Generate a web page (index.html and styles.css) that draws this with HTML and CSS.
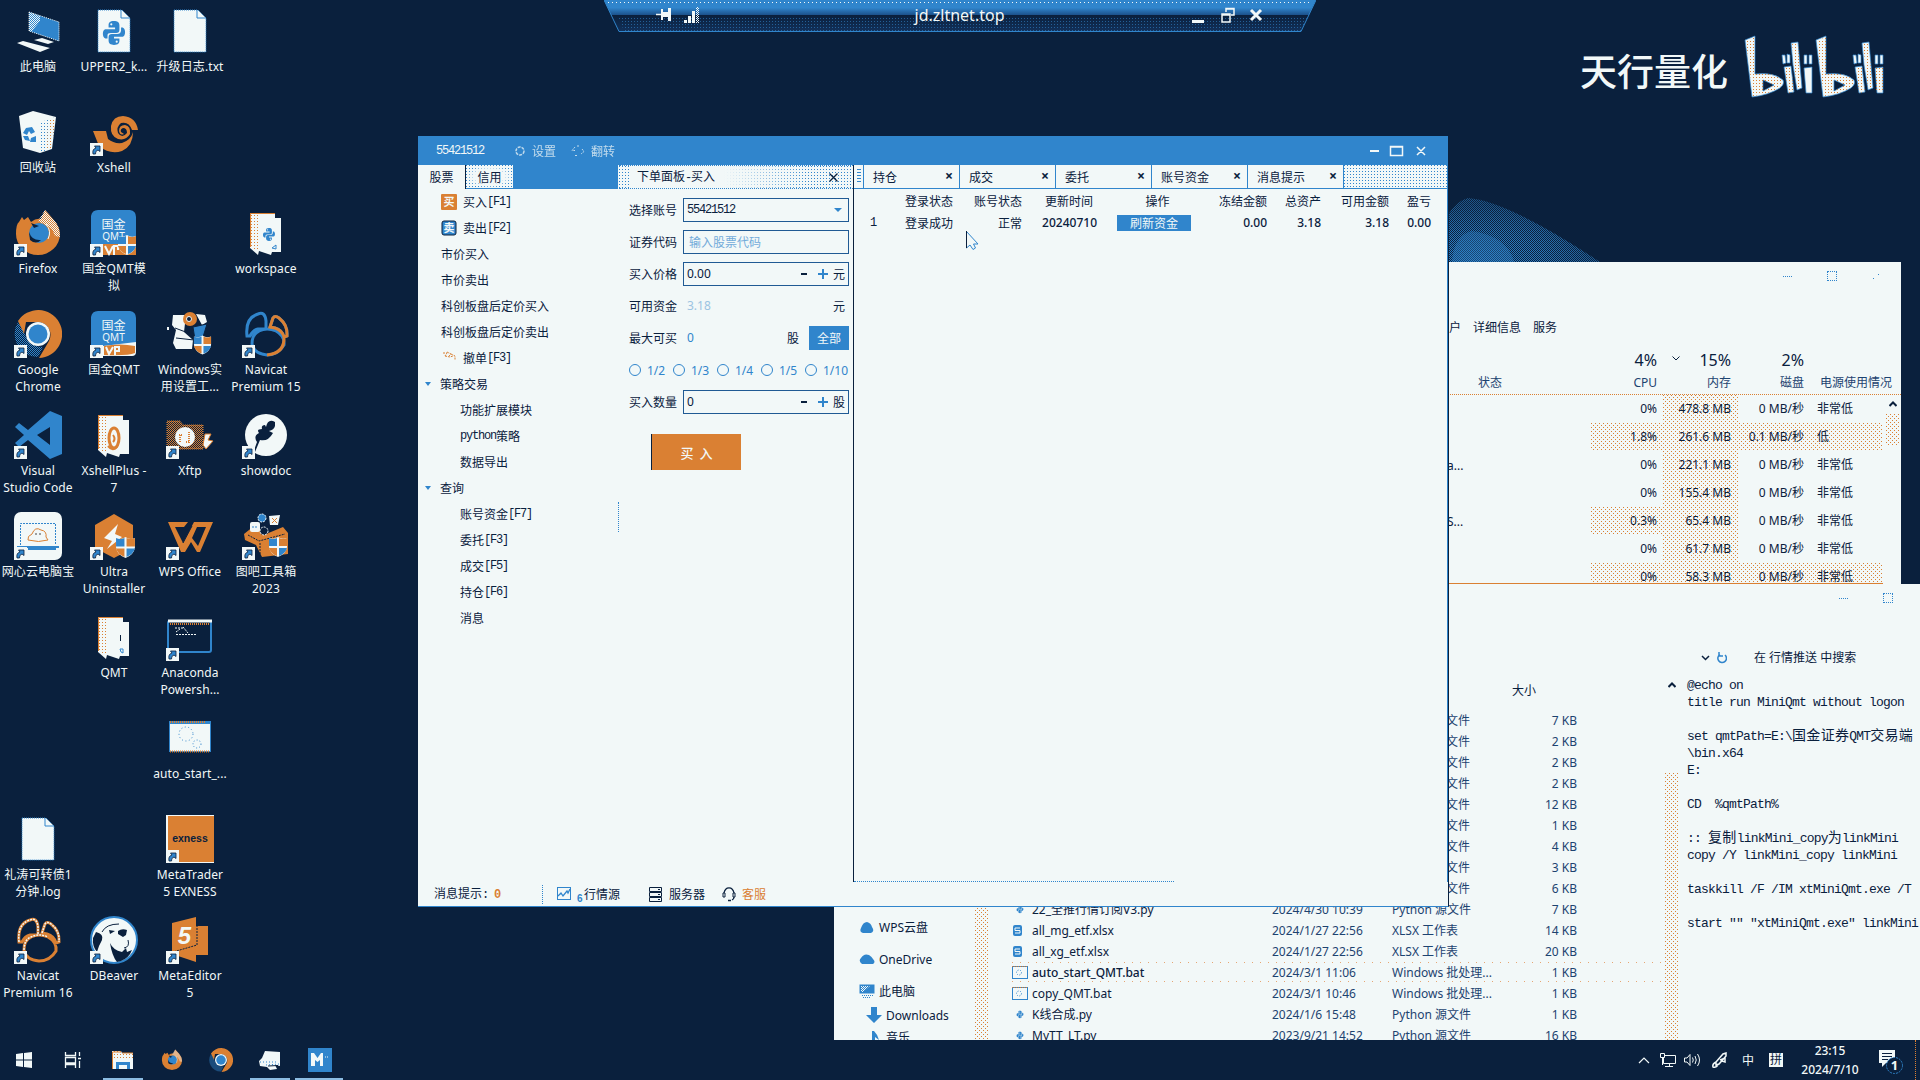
FILE: index.html
```
<!DOCTYPE html>
<html lang="zh-CN">
<head>
<meta charset="utf-8">
<title>jd.zltnet.top</title>
<link rel="stylesheet" href="styles.css">
</head>
<body>
<svg class="defs" aria-hidden="true">
  <defs>
    <pattern id="dots" width="3" height="3" patternUnits="userSpaceOnUse"><rect width="1" height="1" fill="#da8033"/></pattern>
    <pattern id="dotsBlue" width="3" height="3" patternUnits="userSpaceOnUse"><rect width="1" height="1" fill="#3085cc"/></pattern>
    <pattern id="dotsDense" width="2" height="2" patternUnits="userSpaceOnUse"><rect width="1" height="1" fill="#da8033"/><rect x="1" y="1" width="1" height="1" fill="#da8033"/></pattern>
    <pattern id="checkBlue" width="2" height="2" patternUnits="userSpaceOnUse"><rect width="1" height="1" fill="#3085cc"/><rect x="1" y="1" width="1" height="1" fill="#3085cc"/></pattern>
    <pattern id="checkWhite" width="2" height="2" patternUnits="userSpaceOnUse"><rect width="1" height="1" fill="#f2f8f8"/><rect x="1" y="1" width="1" height="1" fill="#f2f8f8"/></pattern>
    <radialGradient id="glow" cx="0.18" cy="1" r="0.9"><stop offset="0" stop-color="#fff"/><stop offset="0.5" stop-color="#ddd"/><stop offset="1" stop-color="#888"/></radialGradient>
    <mask id="glowMask"><path d="M0 20Q8 6 20 3Q60 6 152 67H0Z" fill="url(#glow)"/></mask>
    <symbol id="arrow" viewBox="0 0 13 13"><rect width="13" height="13" fill="#f2f8f8"/><path d="M3 11Q2 6 6 5L4.500 3H10V8.500L8 7Q5 8 5.500 11Z" fill="#3085cc" stroke="#0a203d" stroke-width=".8"/></symbol>
    <symbol id="shield" viewBox="0 0 20 20"><path d="M1 1Q6 3 10 0Q14 3 19 1V10Q18 17 10 20Q2 17 1 10Z" fill="#f2f8f8"/><path d="M1 1Q5 3 9 1V9H1Z M11 11H19Q17 17 11 19Z" fill="#3085cc"/><path d="M11 1Q15 3 19 1V9H11Z M1 11H9V19Q3 17 1 11Z" fill="#da8033"/></symbol>
    <symbol id="py" viewBox="0 0 24 24"><path d="M12 1C8 1 7 2.500 7 5V7H13V8.500H4C1 9 1 16 4 17H6V14Q6 12 9 12H14Q17 12 17 9V5C17 2 15 1 12 1Z" fill="#3085cc"/><path d="M12 23C16 23 17 21.500 17 19V17H12V15.500H20C23 15 23 8 20 7H18.500V10Q18 13 15 13H10Q7 13 7 16V19C7 22 9 23 12 23Z" fill="#3085cc"/><circle cx="9.500" cy="4" r="1" fill="#f2f8f8"/><circle cx="14.500" cy="20" r="1" fill="#f2f8f8"/></symbol>
    <symbol id="file" viewBox="0 0 48 48"><path d="M8 3H32L40 11V45H8Z" fill="#f2f8f8" stroke="#3085cc" stroke-dasharray="1 1"/><path d="M31 3V11H40" fill="none" stroke="#3085cc"/></symbol>
    <symbol id="folder" viewBox="0 0 48 48"><path d="M8 5H33V9H39V43H30L29 46L17 42L16 46L8 39Z" fill="#f2f8f8"/><path d="M8 5H17V42L8 38Z" fill="url(#dots)"/><path d="M8 4.500H33M8.500 5V38" stroke="#da8033" fill="none"/></symbol>
    <symbol id="firefox" viewBox="0 0 48 48"><path d="M2 25Q2 15 5 13L8 8L10 11L14 8L17 13Q22 9 27 10L31 1L39 10Q46 18 46 25A22 21 0 0 1 2 25Z" fill="#da8033"/><path d="M24 12L31 1L40 11Q46 18 46 28L41 27Q38 18 33 17Z" fill="url(#checkWhite)"/><circle cx="25" cy="24" r="10" fill="#3085cc"/><path d="M15 23Q18 32 27 31Q22 36 16 31ZM17 14L25 17L20 19Z" fill="#0a203d"/><path d="M32 15Q38 22 34 30" fill="none" stroke="#f2f8f8"/></symbol>
    <symbol id="chrome" viewBox="0 0 48 48"><path d="M4 11A24 24 0 1 1 25 48L35 31A13 13 0 0 0 24 12H12L10 24Z" fill="#da8033"/><path d="M4 12L13 28Q18 37 29 37L24 47A23 23 0 0 1 4 12Z" fill="url(#checkBlue)"/><circle cx="24" cy="24" r="12" fill="#f2f8f8"/><circle cx="24" cy="24" r="9.500" fill="#3085cc"/></symbol>
    <symbol id="navicat" viewBox="0 0 48 48"><path d="M5 26Q3 8 16 4Q23 1 24 11V19H16Q11 20 8 26ZM28 17L31 8Q33 5 37 8Q46 15 45 26L42 27Q40 20 33 18ZM10 34Q10 24 17 21Q25 17 34 21Q43 26 42 35Q36 45 25 45Q12 44 10 34Z" fill="none" stroke="currentColor" stroke-width="3"/></symbol>
    <symbol id="bat" viewBox="0 0 16 13"><rect x=".5" y=".5" width="15" height="12" fill="#f2f8f8" stroke="#3085cc"/><path d="M0 .5H16" stroke="#da8033" stroke-dasharray="1 1"/><circle cx="7" cy="6.500" r="2.500" fill="none" stroke="#3085cc" stroke-dasharray="1 1.500"/></symbol>
  </defs>
</svg>

<main class="desktop">
  <svg class="wall-light" width="152" height="67" viewBox="0 0 152 67"><g mask="url(#glowMask)"><rect width="152" height="67" fill="url(#checkBlue)"/><path d="M4 67Q6 40 24 36Q60 42 66 67Z" fill="#3085cc" opacity=".4"/></g></svg>

  <div class="brand">
    <span class="brand-name">天行量化</span>
    <svg width="142" height="64" viewBox="0 0 142 64">
      <g id="bili" fill="#f2f8f8" stroke="#3085cc" stroke-width=".7">
        <path fill-rule="evenodd" d="M1 5L11 1V39Q30 37 39 45Q41 49 36 53Q25 60 8 62ZM19 45V56L30 50Z"/>
        <path d="M40 32L47 31L50 57L44 58ZM47 8L54 7L58 53L53 55L49 30ZM60 33L68 32V58L62 58ZM38 20H41L42 28L39 29ZM43 19L46 20V28H43ZM60 20H63V29H60ZM65 20H68V29H65Z"/>
      </g>
      <use href="#bili" x="71"/>
      <g fill="url(#dots)" fill-rule="evenodd"><path d="M2 6L11 2V39Q30 37 38 45Q40 49 35 53Q25 59 9 61ZM19 45V56L30 50ZM41 32L47 31L50 57L44 58ZM48 8L54 7L57 53L53 54Z"/><path d="M73 6L82 2V39Q101 37 109 45Q111 49 106 53Q96 59 80 61ZM90 45V56L101 50ZM112 32L118 31L121 57L115 58ZM119 8L125 7L128 53L124 54ZM131 33H139V57H132Z"/></g>
    </svg>
  </div>

  <section class="icons">
    <div class="ic r1 c1"><svg viewBox="0 0 48 48"><path d="M15 5L45 15V34L15 24Z" fill="#3085cc" stroke="#f2f8f8" stroke-dasharray="1 1"/><path d="M15 5L26 9V14L18 24H15Z" fill="url(#checkWhite)"/><path d="M3 36L9 34L36 41L26 45ZM20 33L28 31L40 35L34 37Z" fill="#f2f8f8"/></svg><p>此电脑</p></div>
    <div class="ic r1 c2"><svg viewBox="0 0 48 48"><use href="#file"/><use href="#py" x="11" y="13" width="26" height="26"/></svg><p>UPPER2_k...</p></div>
    <div class="ic r1 c3"><svg viewBox="0 0 48 48"><use href="#file"/></svg><p>升级日志.txt</p></div>
    <div class="ic r2 c1"><svg viewBox="0 0 48 48"><path d="M5 8L19 3L42 9L38 41L26 45L9 40Z" fill="#f2f8f8"/><path d="M27 14L42 9L38 41L26 44Z" fill="url(#dotsBlue)"/><path d="M34 12L41 11L38 40L33 42Z" fill="url(#dots)"/><path d="M12 20L18 19L21 24L17 26L15 23L13 27L9 25ZM9 28L14 28L16 33L11 32ZM17 30L22 28V34L16 34Z" fill="#3085cc"/></svg><p>回收站</p></div>
    <div class="ic r2 c2"><svg viewBox="0 0 48 48"><path d="M3 23H16L18 31Q24 36 32 35Q41 32 43 24Q43 38 32 43Q20 47 9 38ZM48 22H42Q39 13 31 15Q26 19 28 25Q32 31 37 25Q37 20 33 20Q30 21 31 24L34 26Q30 28 29 23Q29 17 35 17Q41 18 40 26Q36 33 28 31Q20 28 21 18Q23 8 33 8Q46 9 48 22Z" fill="#da8033"/><use href="#arrow" y="35" width="13" height="13"/></svg><p>Xshell</p></div>
    <div class="ic r3 c1"><svg viewBox="0 0 48 48"><use href="#firefox"/><use href="#arrow" y="35" width="13" height="13"/></svg><p>Firefox</p></div>
    <div class="ic r3 c2"><svg viewBox="0 0 48 48"><path d="M1 7Q2 1 8 1H40Q46 2 46 8V35H1Z" fill="#3085cc"/><text x="23.500" y="20" class="logo-cn">国金</text><text x="23.500" y="31" class="logo-en">QMT</text><rect y="35" width="46" height="11" fill="#da8033"/><path d="M15 37L19 45L23 37M24 46V37H28V41" stroke="#f2f8f8" stroke-width="2" fill="none"/><use href="#shield" x="27" y="26" width="20" height="20"/><use href="#arrow" y="35" width="13" height="13"/></svg><p>国金QMT模<br>拟</p></div>
    <div class="ic r3 c4"><svg viewBox="0 0 48 48"><use href="#folder"/><use href="#py" x="20" y="18" width="14" height="15"/><path d="M34 36V40L30 39Z" fill="none" stroke="#3085cc"/></svg><p>workspace</p></div>
    <div class="ic r4 c1"><svg viewBox="0 0 48 48"><use href="#chrome"/><use href="#arrow" y="35" width="13" height="13"/></svg><p>Google<br>Chrome</p></div>
    <div class="ic r4 c2"><svg viewBox="0 0 48 48"><path d="M1 7Q2 1 8 1H40Q46 2 46 8V36H1Z" fill="#3085cc"/><text x="23.500" y="20" class="logo-cn">国金</text><text x="23.500" y="31" class="logo-en">QMT</text><path d="M13 36L46 32V42Q46 46 42 46H13Z" fill="#f2f8f8"/><path d="M14 36Q30 33 45 36V43Q38 46 14 45Z" fill="#da8033"/><path d="M16 37L19 44L23 37M25 45V37H29V41H26" stroke="#f2f8f8" stroke-width="2" fill="none"/><use href="#arrow" y="35" width="13" height="13"/></svg><p>国金QMT</p></div>
    <div class="ic r4 c3"><svg viewBox="0 0 48 48"><path d="M7 5H20L18 22L27 30L26 39H10L7 33L10 20L6 15ZM30 4L39 5L41 12L36 15ZM1 17H3V20H1Z" fill="#f2f8f8"/><path d="M9 18L25 24M10 28L28 30" stroke="#0a203d"/><circle cx="24" cy="9" r="7" fill="#da8033"/><circle cx="23" cy="9" r="2.500" fill="#0a203d" stroke="#f2f8f8"/><path d="M27 17L41 14L37 27L29 30Z" fill="#3085cc" stroke="#0a203d"/><use href="#shield" x="27" y="25" width="19" height="20"/></svg><p>Windows实<br>用设置工...</p></div>
    <div class="ic r4 c4 blue"><svg viewBox="0 0 48 48"><use href="#navicat"/><path d="M28 17L31 8Q33 5 37 8Q46 15 45 26L42 27Q40 20 33 18ZM42 27Q43 43 25 45" fill="none" stroke="#da8033" stroke-width="3"/><use href="#arrow" y="35" width="13" height="13"/></svg><p>Navicat<br>Premium 15</p></div>
    <div class="ic r5 c1"><svg viewBox="0 0 48 48"><path fill-rule="evenodd" d="M36 0L48 5V43L36 48L14 29L5 36L1 32L10 24L1 16L5 12L14 19ZM36 16L23 24L36 34Z" fill="#3085cc"/><use href="#arrow" y="35" width="13" height="13"/></svg><p>Visual<br>Studio Code</p></div>
    <div class="ic r5 c2"><svg viewBox="0 0 48 48"><use href="#folder"/><ellipse cx="24" cy="27" rx="5" ry="10" fill="none" stroke="#da8033" stroke-width="3"/><path d="M23 24Q26 28 23 31M18 35Q23 41 27 36" fill="none" stroke="#da8033" stroke-width="2"/></svg><p>XshellPlus -<br>7</p></div>
    <div class="ic r5 c3"><svg viewBox="0 0 48 48"><path d="M1 10H14L17 14H37V38H1Z" fill="url(#dotsDense)" stroke="#da8033" stroke-dasharray="1 1"/><circle cx="19" cy="26" r="10" fill="#f2f8f8"/><path d="M14 31V23M13 24H17M23 21V32M20 31H24" stroke="#da8033" stroke-dasharray="1 1" stroke-width="2"/><path d="M39 23H45L42 29L47 30L40 38L37 34Z" fill="#f2f8f8" stroke="#da8033"/><use href="#arrow" y="35" width="13" height="13"/></svg><p>Xftp</p></div>
    <div class="ic r5 c4"><svg viewBox="0 0 48 48"><circle cx="24" cy="24" r="21" fill="#f2f8f8"/><path d="M11 42L15 31Q11 25 17 22Q14 18 20 18Q19 14 23 14L24 16Q26 7 33 11V15Q32 19 27 20L31 22Q26 31 18 29L13 41Z" fill="#0a203d"/><use href="#arrow" y="35" width="13" height="13"/></svg><p>showdoc</p></div>
    <div class="ic r6 c1"><svg viewBox="0 0 48 48"><rect width="48" height="48" rx="7" fill="#f2f8f8"/><path d="M6.500 33V11.500H41.500V33" fill="none" stroke="#3085cc" stroke-dasharray="2 1"/><path d="M14 28Q13 24 18 22Q21 14 27 18Q33 19 32 25L34 28Q25 31 14 28Z" fill="#f2f8f8" stroke="#da8033"/><circle cx="22" cy="22" r=".7"/><circle cx="26" cy="22" r=".7"/><path d="M3 35H45M14 37H42" stroke="#3085cc" stroke-width="2"/><use href="#arrow" y="35" width="13" height="13"/></svg><p>网心云电脑宝</p></div>
    <div class="ic r6 c2"><svg viewBox="0 0 48 48"><path d="M24 2L43 13V36L24 46L5 36V13Z" fill="#da8033"/><path d="M28 12L14 26L22 29L17 37L32 25L25 22Z" fill="#f2f8f8"/><use href="#shield" x="25" y="25" width="21" height="21"/><use href="#arrow" y="35" width="13" height="13"/></svg><p>Ultra<br>Uninstaller</p></div>
    <div class="ic r6 c3"><svg viewBox="0 0 48 48"><path fill-rule="evenodd" d="M2 10H22L18 15H9L17 31L28 10H47L34 40H31L25 30L19 40H15ZM31 15L26 26L32 34L40 15Z" fill="#da8033"/><path d="M17 31L26 14" stroke="#0a203d"/><use href="#arrow" y="35" width="13" height="13"/></svg><p>WPS Office</p></div>
    <div class="ic r6 c4"><svg viewBox="0 0 48 48"><path d="M2 22L12 14L24 22L41 15L46 21V42L20 45L14 33L3 28Z" fill="#da8033"/><path d="M6 23L17 29L43 22M18 31V43" stroke="#0a203d" stroke-dasharray="2 1" fill="none"/><circle cx="20" cy="6" r="4" fill="#3085cc" stroke="#f2f8f8" stroke-dasharray="2 1"/><rect x="8" y="10" width="10" height="10" rx="2" fill="#f2f8f8"/><path d="M10 15H16" stroke="#3085cc" stroke-dasharray="2 1"/><path d="M27 4L38 3L36 13H28Z" fill="#f2f8f8"/><path d="M30 6L35 11M35 6L30 11" stroke="#da8033"/><circle cx="22" cy="19" r="4" fill="#0a203d" stroke="#f2f8f8" stroke-dasharray="2 1"/><use href="#shield" x="26" y="25" width="20" height="20"/><use href="#arrow" y="35" width="13" height="13"/></svg><p>图吧工具箱<br>2023</p></div>
    <div class="ic r7 c2"><svg viewBox="0 0 48 48"><use href="#folder"/><path d="M30.500 22V28" stroke="#0a203d"/><path d="M30 36H33V40L31 39Z" fill="none" stroke="#3085cc"/></svg><p>QMT</p></div>
    <div class="ic r7 c3"><svg viewBox="0 0 48 48"><rect x="2" y="8" width="43" height="31" rx="2" fill="#0a203d" stroke="#3085cc" stroke-width="2"/><path d="M2 8H46" stroke="#f2f8f8" stroke-width="3"/><path d="M4 11H44" stroke="#da8033" stroke-dasharray="1 1" stroke-width="2"/><path d="M9 15H17M10 19L14 16M17 14L22 20M10 21.500H31" stroke="#f2f8f8" stroke-dasharray="2 1"/><use href="#arrow" y="35" width="13" height="13"/></svg><p>Anaconda<br>Powersh...</p></div>
    <div class="ic r8 c3"><svg viewBox="0 0 48 48"><rect x="3.500" y="7.500" width="41" height="30" fill="#f2f8f8" stroke="#3085cc"/><path d="M3 8.500H45" stroke="#3085cc" stroke-width="3"/><path d="M4 8H40M4 37.500H44" stroke="#da8033" stroke-dasharray="1 1" stroke-width="2"/><circle cx="20" cy="20" r="7" fill="none" stroke="#3085cc" stroke-dasharray="1 2.500"/><circle cx="31" cy="30" r="4" fill="none" stroke="#3085cc" stroke-dasharray="1 2"/></svg><p>auto_start_...</p></div>
    <div class="ic r9 c1"><svg viewBox="0 0 48 48"><use href="#file"/></svg><p>礼涛可转债1<br>分钟.log</p></div>
    <div class="ic r9 c3"><svg viewBox="0 0 48 48"><rect width="48" height="48" fill="#f2f8f8"/><rect x="2" y="1" width="46" height="46" fill="#da8033"/><text x="24" y="26.500" class="logo-ex">exness</text><use href="#arrow" y="35" width="13" height="13"/></svg><p>MetaTrader<br>5 EXNESS</p></div>
    <div class="ic r10 c1 orange"><svg viewBox="0 0 48 48"><use href="#navicat"/><path d="M5 26Q3 8 16 4Q23 1 24 11V19M28 17L31 8Q33 5 37 8Q46 15 45 26M10 34Q10 24 17 21Q25 17 34 21" fill="none" stroke="#f2f8f8" stroke-width="1.500" stroke-dasharray="2 1"/><use href="#arrow" y="35" width="13" height="13"/></svg><p>Navicat<br>Premium 16</p></div>
    <div class="ic r10 c2"><svg viewBox="0 0 48 48"><circle cx="24" cy="24" r="23" fill="#f2f8f8" stroke="#3085cc" stroke-width="2"/><path d="M6 16Q14 18 12 24Q9 29 7 36Q2 30 3 22ZM19 14L25 15L20 18ZM28 15Q32 12 37 14L36 19L33 21L28 18ZM20 27Q23 34 32 36L36 32L37 36L42 34Q39 42 31 45L27 46Q22 40 20 27Z" fill="#0a203d"/><path d="M12 16Q16 8 29 8M38 24Q40 31 34 32" fill="none" stroke="#0a203d"/><use href="#arrow" y="35" width="13" height="13"/></svg><p>DBeaver</p></div>
    <div class="ic r10 c3"><svg viewBox="0 0 48 48"><path d="M6 7L30 1V10H42V39H30V46L6 38Z" fill="#da8033"/><path d="M31 3V29L7 36" fill="none" stroke="#0a203d" stroke-dasharray="2 1"/><text x="18.500" y="28" class="logo-five">5</text><use href="#arrow" y="35" width="13" height="13"/></svg><p>MetaEditor<br>5</p></div>
  </section>

  <section class="win taskmgr">
    <header class="winctl"><i class="mn"></i><i class="mx"></i><i class="cl"></i></header>
    <nav class="tm-tabs"><span>户</span><span>详细信息</span><span>服务</span></nav>
    <div class="tm-grid tm-pct"><span></span><b>4%</b><b><svg width="8" height="5" viewBox="0 0 8 5"><path d="M.5.5L4 4L7.500.5" fill="none" stroke="#0a203d"/></svg>15%</b><b>2%</b><span></span></div>
    <div class="tm-grid tm-cols"><span class="st">状态</span><b>CPU</b><b>内存</b><b>磁盘</b><span>电源使用情况</span></div>
    <div class="tm-body">
      <div class="tm-rows">
        <div class="tm-grid"><span></span><b>0%</b><b class="h">478.8 MB</b><b>0 MB/秒</b><span>非常低</span></div>
        <div class="tm-grid hot"><span></span><b>1.8%</b><b class="h">261.6 MB</b><b>0.1 MB/秒</b><span>低</span></div>
        <div class="tm-grid"><span class="cut">a...</span><b>0%</b><b class="h">221.1 MB</b><b>0 MB/秒</b><span>非常低</span></div>
        <div class="tm-grid"><span></span><b>0%</b><b class="h">155.4 MB</b><b>0 MB/秒</b><span>非常低</span></div>
        <div class="tm-grid warm"><span class="cut">S...</span><b>0.3%</b><b class="h">65.4 MB</b><b>0 MB/秒</b><span>非常低</span></div>
        <div class="tm-grid"><span></span><b>0%</b><b class="h">61.7 MB</b><b>0 MB/秒</b><span>非常低</span></div>
        <div class="tm-grid hot last"><span></span><b>0%</b><b class="h">58.3 MB</b><b>0 MB/秒</b><span>非常低</span></div>
      </div>
      <div class="tm-scroll"><svg width="8" height="6" viewBox="0 0 8 6"><path d="M.5 5L4 1.500L7.500 5" fill="none" stroke="#0a203d" stroke-width="2"/></svg><i></i></div>
    </div>
  </section>

  <section class="win explorer">
    <header class="winctl"><i class="mn"></i><i class="mx"></i></header>
    <div class="ex-bar"><svg width="26" height="13" viewBox="0 0 26 13"><path d="M1 5L4.500 8.500L8 5" fill="none" stroke="#0a203d" stroke-width="1.500"/><path d="M19 3.500A4.300 4.300 0 1 0 24 4M18 1V5H22" fill="none" stroke="#3085cc" stroke-width="1.500"/></svg><span>在 行情推送 中搜索</span></div>
    <div class="ex-body">
      <aside class="ex-nav">
        <div class="nv"><svg width="16" height="14" viewBox="0 0 16 14"><path d="M4 13Q0 12 2 8Q4 2 8 2Q12 3 13 7Q16 11 12 13Z" fill="#3085cc"/></svg>WPS云盘</div>
        <div class="nv"><svg width="16" height="14" viewBox="0 0 16 14"><path d="M3 12Q-1 9 2 6Q5 1 10 3Q13 5 14 7Q17 10 14 12Z" fill="#3085cc"/></svg>OneDrive</div>
        <div class="nv"><svg width="16" height="14" viewBox="0 0 16 14"><rect x=".5" y=".5" width="15" height="9" fill="#3085cc"/><path d="M2 2H11L4 8H2Z" fill="url(#checkWhite)"/><path d="M3 11.500H14M4 13.500H12" stroke="#3085cc" stroke-dasharray="1 1"/></svg>此电脑</div>
        <div class="nv sub"><svg width="16" height="16" viewBox="0 0 16 16"><path d="M5 0H11V8H16L8 16L0 8H5Z" fill="#3085cc"/></svg>Downloads</div>
        <div class="nv sub"><svg width="16" height="16" viewBox="0 0 16 16"><path d="M6 2L8 2Q12 6 13 11L9 8V16H6Z" fill="#3085cc"/></svg>音乐</div>
      </aside>
      <div class="ex-split"></div>
      <div class="ex-list">
        <div class="fr head"><span></span><span></span><span></span><span></span><b>大小</b></div>
        <div class="files">
          <div class="fr"><span></span><span></span><span></span><span class="end">文件</span><b>7 KB</b></div>
          <div class="fr"><span></span><span></span><span></span><span class="end">文件</span><b>2 KB</b></div>
          <div class="fr"><span></span><span></span><span></span><span class="end">文件</span><b>2 KB</b></div>
          <div class="fr"><span></span><span></span><span></span><span class="end">文件</span><b>2 KB</b></div>
          <div class="fr"><span></span><span></span><span></span><span class="end">文件</span><b>12 KB</b></div>
          <div class="fr"><span></span><span></span><span></span><span class="end">文件</span><b>1 KB</b></div>
          <div class="fr"><span></span><span></span><span></span><span class="end">文件</span><b>4 KB</b></div>
          <div class="fr"><span></span><span></span><span></span><span class="end">文件</span><b>3 KB</b></div>
          <div class="fr"><span></span><span></span><span></span><span class="end">文件</span><b>6 KB</b></div>
          <div class="fr"><svg viewBox="0 0 16 13"><use href="#py" x="4" y="2" width="8" height="9"/></svg><em>22_全推行情订阅V3.py</em><span>2024/4/30 10:39</span><span>Python 源文件</span><b>7 KB</b></div>
          <div class="fr"><svg viewBox="0 0 16 13"><rect x="1" y="1" width="9" height="11" rx="2" fill="#3085cc"/><path d="M8 4H3V6.500H8V9H3" fill="none" stroke="#f2f8f8"/></svg><em>all_mg_etf.xlsx</em><span>2024/1/27 22:56</span><span>XLSX 工作表</span><b>14 KB</b></div>
          <div class="fr"><svg viewBox="0 0 16 13"><rect x="1" y="1" width="9" height="11" rx="2" fill="#3085cc"/><path d="M8 4H3V6.500H8V9H3" fill="none" stroke="#f2f8f8"/></svg><em>all_xg_etf.xlsx</em><span>2024/1/27 22:56</span><span>XLSX 工作表</span><b>20 KB</b></div>
          <div class="fr sel"><svg viewBox="0 0 16 13"><use href="#bat"/></svg><em>auto_start_QMT.bat</em><span>2024/3/1 11:06</span><span>Windows 批处理...</span><b>1 KB</b></div>
          <div class="fr"><svg viewBox="0 0 16 13"><use href="#bat"/></svg><em>copy_QMT.bat</em><span>2024/3/1 10:46</span><span>Windows 批处理...</span><b>1 KB</b></div>
          <div class="fr"><svg viewBox="0 0 16 13"><use href="#py" x="4" y="2" width="8" height="9"/></svg><em>K线合成.py</em><span>2024/1/6 15:48</span><span>Python 源文件</span><b>1 KB</b></div>
          <div class="fr"><svg viewBox="0 0 16 13"><use href="#py" x="4" y="2" width="8" height="9"/></svg><em>MyTT_LT.py</em><span>2023/9/21 14:52</span><span>Python 源文件</span><b>16 KB</b></div>
        </div>
      </div>
      <div class="ex-scroll"><svg width="8" height="6" viewBox="0 0 8 6"><path d="M.5 5L4 1.500L7.500 5" fill="none" stroke="#0a203d" stroke-width="2"/></svg><i></i></div>
<pre class="code">@echo on
title run MiniQmt without logon

set qmtPath=E:\<span>国金证券</span>QMT<span>交易端</span>
\bin.x64
E:

CD  %qmtPath%

:: <span>复制</span>linkMini_copy<span>为</span>linkMini
copy /Y linkMini_copy linkMini

taskkill /F /IM xtMiniQmt.exe /T

start "" "xtMiniQmt.exe" linkMini</pre>
    </div>
  </section>

  <section class="win trade">
    <header class="tr-title">
      <span class="n acct">55421512</span>
      <span class="tool"><svg width="12" height="12" viewBox="0 0 12 12"><circle cx="6" cy="6" r="4" fill="none" stroke="#f2f8f8" stroke-width="1.500" stroke-dasharray="3 1"/></svg>设置</span>
      <span class="tool"><svg width="14" height="12" viewBox="0 0 14 12"><path d="M4 2L1 5.500H4M11 4L13 6.500L10 9M4 10.500H7M6 1H8" fill="none" stroke="#f2f8f8" stroke-dasharray="2 1"/></svg>翻转</span>
      <svg class="ctl" width="56" height="12" viewBox="0 0 56 12"><path d="M0 6H9" stroke="#f2f8f8" stroke-width="2"/><path d="M20.500 1.500H32.500V10.500H20.500ZM20 2H33M47 2L55 10M55 2L47 10" fill="none" stroke="#f2f8f8" stroke-width="1.500"/></svg>
    </header>
    <div class="tr-main">
      <aside class="side">
        <div class="side-tabs"><span class="on">股票</span><span class="off">信用</span></div>
        <div class="tree">
          <div class="t ico"><svg width="16" height="16" viewBox="0 0 16 16"><rect width="16" height="16" rx="1" fill="#da8033"/><text x="8" y="12" class="sq">买</text></svg>买入<i class="n">[F1]</i></div>
          <div class="t ico"><svg width="16" height="16" viewBox="0 0 16 16"><rect x="1" y="1" width="14" height="14" rx="2" fill="#3085cc" stroke="#0a203d"/><text x="8" y="12" class="sq">卖</text></svg>卖出<i class="n">[F2]</i></div>
          <div class="t">市价买入</div>
          <div class="t">市价卖出</div>
          <div class="t">科创板盘后定价买入</div>
          <div class="t">科创板盘后定价卖出</div>
          <div class="t ico"><svg width="16" height="16" viewBox="0 0 16 16"><path d="M2 3L6 3L4 6M6 2L10 4L8 6M10 4L14 6V10M4 6L9 7L12 6" fill="none" stroke="#da8033" stroke-dasharray="2 1"/></svg>撤单<i class="n">[F3]</i></div>
          <div class="t grp">策略交易</div>
          <div class="t lv2">功能扩展模块</div>
          <div class="t lv2"><i class="n">python</i>策略</div>
          <div class="t lv2">数据导出</div>
          <div class="t grp">查询</div>
          <div class="t lv2">账号资金<i class="n">[F7]</i></div>
          <div class="t lv2">委托<i class="n">[F3]</i></div>
          <div class="t lv2">成交<i class="n">[F5]</i></div>
          <div class="t lv2">持仓<i class="n">[F6]</i></div>
          <div class="t lv2">消息</div>
        </div>
      </aside>
      <div class="handle"></div>
      <section class="order">
        <header class="ord-head"><span>下单面板<i class="n">-</i>买入</span><svg width="9" height="9" viewBox="0 0 9 9"><path d="M.5.5L8.500 8.500M8.500.5L.5 8.500" stroke="#0a203d" stroke-width="1.300"/></svg></header>
        <div class="form">
          <div class="f"><label>选择账号</label><div class="box"><span class="n">55421512</span><u class="dd"></u></div></div>
          <div class="f"><label>证券代码</label><div class="box ph">输入股票代码</div></div>
          <div class="f"><label>买入价格</label><div class="box"><span class="v">0.00</span><u class="mi"></u><u class="pl"></u>元</div></div>
          <div class="f"><label>可用资金</label><div class="plain"><span class="v faint">3.18</span>元</div></div>
          <div class="f"><label>最大可买</label><div class="plain mx-buy"><span class="v bl">0</span>股<button>全部</button></div></div>
          <div class="f radios"><span><i></i>1/2</span><span><i></i>1/3</span><span><i></i>1/4</span><span><i></i>1/5</span><span><i></i>1/10</span></div>
          <div class="f"><label>买入数量</label><div class="box"><span class="v">0</span><u class="mi"></u><u class="pl"></u>股</div></div>
          <button class="buy">买 入</button>
        </div>
      </section>
      <section class="detail">
        <nav class="dt-tabs"><s></s><span>持仓<i>×</i></span><span>成交<i>×</i></span><span>委托<i>×</i></span><span>账号资金<i>×</i></span><span>消息提示<i>×</i></span><em></em></nav>
        <table>
          <colgroup><col style="width:23px"><col style="width:76px"><col style="width:69px"><col style="width:75px"><col style="width:104px"><col style="width:66px"><col style="width:54px"><col style="width:68px"><col style="width:42px"></colgroup>
          <tr><th></th><th>登录状态</th><th>账号状态</th><th class="dt">更新时间</th><th class="op">操作</th><th>冻结金额</th><th>总资产</th><th>可用金额</th><th>盈亏</th></tr>
          <tr><td class="n">1</td><td>登录成功</td><td>正常</td><td class="d">20240710</td><td class="op"><button>刷新资金</button></td><td class="d">0.00</td><td class="d">3.18</td><td class="d">3.18</td><td class="d">0.00</td></tr>
        </table>
        <div class="dt-foot"></div>
      </section>
    </div>
    <footer class="tr-foot">
      <span>消息提示<i class="n">: </i><b>0</b></span><hr>
      <svg class="f1" width="26" height="18" viewBox="0 0 26 18"><rect x=".5" y="2.500" width="13" height="12" fill="none" stroke="#3085cc"/><path d="M1 11L4 8L6 11L10 6L11 8L13 4" fill="none" stroke="#3085cc" stroke-width="1.300"/><text x="20" y="17" class="six">6</text></svg><span>行情源</span>
      <svg class="f2" width="13" height="15" viewBox="0 0 13 15"><path d="M.5.500H12.500V4.500H.5ZM.5 5.500H12.500V9.500H.5ZM.5 10.500H12.500V14.500H.5ZM9 2.500H11M9 7.500H11M9 12.500H11" fill="none" stroke="#0a203d"/></svg><span>服务器</span>
      <svg class="f3" width="14" height="15" viewBox="0 0 14 15"><path d="M2 6Q3 .8 7 .8Q11 .8 12 6M10 13Q12 12 12 10M6 13.500H9" fill="none" stroke="#0a203d" stroke-width="1.300"/><path d="M1 6H3V10H1ZM11 6H13V10H11Z" fill="none" stroke="#0a203d"/></svg><span class="kf">客服</span>
    </footer>
  </section>

  <svg class="cursor" width="13" height="19" viewBox="0 0 13 19"><path d="M.5.5V17L4 14L7 18.500L9.500 17L7.500 13H12Z" fill="#f2f8f8" stroke="#3085cc"/><path d="M.5 0V17" stroke="#0a203d"/></svg>

  <header class="rdp">
    <svg class="rdp-bg" width="712" height="32" viewBox="0 0 712 32"><defs><linearGradient id="rg" x2="0" y2="1"><stop offset="0" stop-color="#3085cc"/><stop offset=".25" stop-color="#3085cc"/><stop offset=".48" stop-color="#1c528c"/><stop offset=".5" stop-color="#0a203d"/><stop offset="1" stop-color="#123059"/></linearGradient></defs><path d="M0 0H712L697 31H15Z" fill="url(#rg)"/><path d="M14 16H704L697 31H20Z" fill="url(#dotsBlue)" opacity=".6"/><path d="M0 0L15 31.500H697L712 0" fill="none" stroke="#3085cc"/><path d="M4 2.500H708" stroke="#f2f8f8" stroke-dasharray="1 3"/></svg>
    <div class="rdp-row">
      <svg width="44" height="18" viewBox="0 0 44 18"><path d="M0 8.500H6" stroke="#f2f8f8" stroke-width="1.500"/><path d="M5 3H7V6H12V2H15V15H12V11H7V14H5Z" fill="#f2f8f8"/><path d="M28 14H31V17H28ZM32 10H35V17H32ZM36 5H39V17H36Z" fill="#f2f8f8"/><path d="M40 1H43V17H40Z" fill="url(#checkWhite)"/></svg>
      <span>jd.zltnet.top</span>
      <svg width="72" height="18" viewBox="0 0 72 18"><path d="M0 14H12V17H0Z" fill="#f2f8f8"/><path d="M30 8H38V16H30ZM30 9H38M34 6V2.500H42V9H39M34 3H42" fill="none" stroke="#f2f8f8" stroke-width="1.500"/><path d="M59 4L69 14M69 4L59 14" stroke="#f2f8f8" stroke-width="3"/></svg>
    </div>
  </header>

  <footer class="taskbar">
    <div class="tb-apps">
      <svg class="a" viewBox="0 0 24 24"><path d="M4 6L11 5V11.500H4ZM12 5L20 4V11.500H12ZM4 12.500H11V19L4 18ZM12 12.500H20V20L12 19Z" fill="#f2f8f8"/></svg>
      <svg class="a" viewBox="0 0 24 24"><path d="M4.500 4V7.500H14.500V4M4.500 20V16.500H14.500V20M4.500 9.500H14.500V15H4.500ZM18.500 4V8M18.500 13V20M17 10.500H20" fill="none" stroke="#f2f8f8" stroke-width="1.300"/></svg>
      <svg class="a" viewBox="0 0 24 24"><path d="M1 3H10L11 5H22V21H1Z" fill="#f2f8f8"/><path d="M1 3H10L11 5H22V12H1Z" fill="url(#dots)"/><path d="M1.500 21V4H10M11 5H22" fill="none" stroke="#da8033"/><path d="M5 21V14H19V21H16V17H8V21Z" fill="#3085cc"/></svg>
      <svg class="a" viewBox="0 0 24 24"><use href="#firefox" x="1" y="1" width="22" height="22"/></svg>
      <svg class="a" viewBox="0 0 24 24"><use href="#chrome" width="24" height="24"/></svg>
      <svg class="a" viewBox="0 0 24 24"><path d="M7 3L22 4V18L17 17L19 21L12 22L9 19L2 18L1 13L4 10Z" fill="#f2f8f8"/><path d="M2 14H18M8 17L21 16" stroke="#3085cc" stroke-dasharray="1 2"/><path d="M10 18L20 17.500" stroke="#0a203d"/></svg>
      <svg class="a" viewBox="0 0 24 24"><rect width="24" height="24" fill="#3085cc"/><path d="M3 18V5H6L9.500 10L13 5H15V18H12V12L9.500 14L7 12V18Z" fill="#f2f8f8"/><path d="M17 9H20" stroke="#f2f8f8" stroke-dasharray="1 1"/></svg>
    </div>
    <div class="tb-lines"><i></i><i></i><i></i></div>
    <div class="tray">
      <svg width="12" height="8" viewBox="0 0 12 8"><path d="M1 7L6 2L11 7" fill="none" stroke="#f2f8f8" stroke-width="1.200"/></svg>
      <svg width="16" height="14" viewBox="0 0 16 14"><path d="M5 2.500H15.500V10.500H3.500V5M9.500 11V13M5 13.500H13M.5.500H4.500V4.500H.5ZM2.500 5V12" fill="none" stroke="#f2f8f8"/></svg>
      <svg width="17" height="14" viewBox="0 0 17 14"><path d="M.5 5H3L6 1.500V12.500L3 9H.5ZM8.500 4.500Q10 7 8.500 9.500M11 3Q13.500 7 11 11M13.500 1Q17.500 7 13.500 13" fill="none" stroke="#f2f8f8"/></svg>
      <svg width="16" height="16" viewBox="0 0 16 16"><path d="M4 10L11 2L14 1V4L7 12L4 13ZM8 8L13 6V10L10 9M4 10Q0 12 1 15Q4 16 6 13" fill="none" stroke="#f2f8f8" stroke-width="1.500"/></svg>
      <span class="ime">中</span><span class="pin">拼</span>
      <div class="clock">23:15<br>2024/7/10</div>
      <svg class="note" width="25" height="24" viewBox="0 0 25 24"><path d="M0 0H16V13H7L3 17V13H0Z" fill="#f2f8f8"/><path d="M3 3.500H13M3 6.500H13M3 9.500H9" stroke="#0a203d"/><circle cx="15.500" cy="15.500" r="8" fill="#0a203d" stroke="#3085cc" stroke-dasharray="2 1"/><text x="15.500" y="20" class="badge">1</text></svg>
    </div>
  </footer>
</main>
</body>
</html>
```
FILE: styles.css
```
:root {
  --navy: #0a203d;
  --blue: #3085cc;
  --orange: #da8033;
  --paper: #f2f8f8;
  --dot: #da8033;
  --ui: "Noto Sans", "Noto Sans CJK SC", sans-serif;
}
* { box-sizing: border-box; --sq: conic-gradient(from 270deg at 1px 1px, var(--dot) 90deg, transparent 0); }
body { margin: 0; background: var(--navy); font: 12px/17px var(--ui); color: var(--navy); }
p { margin: 0; }
i, em { font-style: normal; }
b { font-weight: 400; }
button { border: 0; padding: 0; font: inherit; }
.defs { position: absolute; width: 0; height: 0; }
.desktop { position: relative; width: 1920px; height: 1080px; overflow: hidden; background: var(--navy); }
.wall-light { position: absolute; left: 1448px; top: 195px; }

.brand { position: absolute; left: 1580px; top: 35px; display: flex; gap: 16px; color: var(--paper); }
.brand-name { font: 500 37px/76px "Noto Sans CJK SC", sans-serif; height: 64px; margin-top: -3px; }

/* desktop shortcuts */
.icons { display: grid; grid-template-columns: repeat(4, 76px); grid-template-rows: repeat(10, 101px); width: 304px; }
.ic { padding-top: 7px; display: flex; flex-direction: column; align-items: center; color: var(--paper); white-space: nowrap; }
.ic svg { width: 48px; height: 48px; flex: none; }
.ic p { margin-top: 3px; text-align: center; letter-spacing: .1px; }
.ic.blue svg { color: var(--blue); }
.ic.orange svg { color: var(--orange); }
.r1 { grid-row: 1; } .r2 { grid-row: 2; } .r3 { grid-row: 3; } .r4 { grid-row: 4; } .r5 { grid-row: 5; }
.r6 { grid-row: 6; } .r7 { grid-row: 7; } .r8 { grid-row: 8; } .r9 { grid-row: 9; } .r10 { grid-row: 10; }
.c1 { grid-column: 1; } .c2 { grid-column: 2; } .c3 { grid-column: 3; } .c4 { grid-column: 4; }
.logo-cn { font: 12px "Noto Sans CJK SC", sans-serif; fill: var(--paper); text-anchor: middle; }
.logo-en { font: 10px "Noto Sans", sans-serif; fill: var(--paper); text-anchor: middle; }
.logo-ex { font: bold 10.500px "Liberation Sans", sans-serif; fill: var(--navy); text-anchor: middle; }
.logo-five { font: italic bold 24px "Liberation Sans", sans-serif; fill: var(--paper); text-anchor: middle; }

.win { position: absolute; background: var(--paper); display: flex; flex-direction: column; overflow: hidden; }
.winctl { display: flex; align-items: center; flex: none; }
.winctl i { flex: none; }
.winctl .mn { width: 9px; border-top: 1px dotted var(--blue); margin-right: 35px; }
.winctl .mx { width: 10px; height: 10px; border: 1px dotted var(--blue); }
.winctl .cl { width: 6px; height: 5px; margin-left: 36px; background: linear-gradient(var(--blue), var(--blue)) 100% 0/1px 1px no-repeat, linear-gradient(var(--blue), var(--blue)) 0 100%/1px 1px no-repeat; }

/* task manager */
.taskmgr { left: 1440px; top: 262px; width: 461px; height: 322px; }
.taskmgr .winctl { height: 28px; padding-left: 343px; }
.tm-tabs { display: flex; flex: none; gap: 12px; padding: 29px 0 0 9px; height: 59px; }
.tm-grid { display: grid; grid-template-columns: 151px 72px 76px 72px 72px; align-items: center; }
.tm-grid b { text-align: right; padding-right: 6px; white-space: nowrap; }
.tm-grid b:nth-child(3) { padding-right: 8px; }
.tm-grid b:nth-child(4) { padding-right: 7px; }
.tm-grid > :last-child { padding-left: 6px; white-space: nowrap; }
.tm-pct { flex: none; height: 22px; font-size: 16px; }
.tm-pct svg { margin-right: 19px; vertical-align: 5px; }
.tm-cols { flex: none; height: 23px; color: #1d4370; }
.tm-cols > :last-child { padding-left: 9px; }
.tm-grid .st { padding-left: 38px; }
.tm-grid .cut { padding-left: 7px; }
.tm-body { display: flex; flex: 1; border-top: 1px dotted var(--orange); }
.tm-rows .tm-grid { height: 28px; }
.tm-rows .tm-grid.last { height: 21px; overflow: hidden; border-bottom: 1px solid var(--orange); align-items: start; }
.tm-rows b, .tm-rows > div > :last-child { line-height: 28px; }
.tm-rows .h, .hot b, .hot > :last-child, .warm b:nth-child(2) { background: var(--sq) 0 0/4px 4px, var(--sq) 2px 2px/4px 4px; }
.tm-scroll { width: 13px; margin-left: 3px; padding-top: 6px; display: flex; flex-direction: column; align-items: center; gap: 7px; }
.tm-scroll i { width: 13px; height: 31px; background: var(--sq) 0 0/4px 4px, var(--sq) 2px 2px/4px 4px; }

/* file explorer with preview pane */
.explorer { left: 834px; top: 584px; width: 1086px; height: 456px; }
.explorer .winctl { height: 28px; padding-left: 1005px; }
.ex-bar { height: 66px; padding: 24px 0 0 867px; display: flex; align-items: center; gap: 27px; white-space: nowrap; }
.ex-bar svg { flex: none; }
.ex-body { display: flex; flex: 1; overflow: hidden; }
.ex-nav { width: 141px; flex: none; padding-top: 233px; }
.nv { height: 32px; padding-left: 25px; display: flex; align-items: center; gap: 4px; }
.nv.sub { height: 22px; padding-left: 32px; }
.nv:nth-child(4) { margin-top: -3px; }
.ex-split { width: 13px; flex: none; background: var(--sq) 0 0/4px 4px, var(--sq) 2px 2px/4px 4px; }
.ex-list { width: 679px; flex: none; padding-left: 24px; display: flex; flex-direction: column; }
.fr { display: grid; grid-template-columns: 20px 240px 120px 105px 80px; height: 21px; align-items: center; white-space: nowrap; }
.fr svg { width: 16px; height: 13px; }
.fr span { color: #1d4370; }
.fr .end { padding-left: 54px; }
.fr b { text-align: right; color: #1d4370; }
.fr.head { flex: none; height: 24px; }
.fr.head b { padding-right: 41px; color: var(--navy); }
.files { display: flex; flex-direction: column; margin-top: 8px; height: 330px; overflow: hidden; }
.files .fr { flex: none; }
.fr.sel { --dot: #e6a673; background: var(--sq) 0 0/8px 19px; }
.fr.sel em { font-weight: 500; }
.ex-scroll { width: 13px; flex: none; margin-left: -2px; padding-top: 4px; display: flex; flex-direction: column; align-items: center; }
.ex-scroll i { width: 13px; height: 267px; margin-top: 85px; background: var(--sq) 0 0/4px 4px, var(--sq) 2px 2px/4px 4px; }
.code { margin: -1px 0 0 9px; font: 13px/17px "Liberation Mono", "Noto Sans CJK SC", monospace; letter-spacing: -.8px; }
.code span { font: 14px/0 "Noto Sans CJK SC", sans-serif; letter-spacing: .3px; }

/* trading terminal */
.trade { left: 418px; top: 136px; width: 1031px; height: 771px; border-right: 1px solid var(--navy); border-bottom: 1px solid var(--blue); font: 12px/16px "Noto Sans CJK SC", sans-serif; }
.n { font-family: "Liberation Mono", monospace; letter-spacing: -1.200px; font-style: normal; }
.v { font-family: "Noto Sans", sans-serif; }
.tr-title { height: 29px; flex: none; background: var(--blue); color: var(--paper); display: flex; align-items: center; padding-left: 18px; }
.tr-title .acct { width: 78px; }
.tool { display: flex; align-items: center; gap: 6px; opacity: .75; margin-right: 15px; }
.tr-title .ctl { margin-left: auto; margin-right: 22px; }
.tr-main { display: flex; flex: 1; }
.side { width: 200px; }
.side-tabs { display: flex; height: 24px; background: var(--blue); border-bottom: 1px solid var(--blue); line-height: 23px; }
.side-tabs span { width: 47px; text-align: center; }
.side-tabs .on { background: var(--paper); height: 24px; border-right: 1px solid var(--navy); width: 48px; }
.side-tabs .off { --dot: var(--blue); background: radial-gradient(closest-side, var(--paper) 60%, transparent), var(--sq) 0 0/3px 3px, var(--paper); }
.tree { margin-left: -1px; }
.t { height: 26px; padding-left: 24px; display: flex; align-items: center; }
.t svg { margin-right: 6px; }
.t.lv2 { padding-left: 43px; }
.t.grp { padding-left: 8px; gap: 9px; }
.t.grp::before { content: ""; border: 3.500px solid transparent; border-top: 4px solid var(--blue); border-bottom: 0; }
.sq { font: bold 11px "Noto Sans CJK SC", sans-serif; fill: var(--paper); text-anchor: middle; }
.handle { width: 1px; height: 30px; margin-top: 337px; border-left: 1px dotted var(--blue); }
.order { width: 234px; }
.ord-head { height: 24px; display: flex; align-items: center; justify-content: space-between; padding: 0 15px 0 18px; border-top: 1px dotted var(--blue); --dot: var(--blue); background: linear-gradient(90deg, transparent 11px, var(--paper) 11px 105px, transparent 190px), var(--sq) 0 0/3px 3px, var(--paper); border-bottom: 1px dotted var(--blue); }
.form { padding: 5px 4px 0 10px; }
.f { height: 32px; display: flex; align-items: center; }
.f label { width: 54px; }
.box, .plain { flex: 1; height: 24px; display: flex; align-items: center; padding: 0 4px 0 4px; }
.box { border: 1px solid #205a94; padding: 0 3px; }
.box .n, .box .v, .plain .v { flex: 1; }
.box.ph { padding-left: 5px; color: #72abda; }
.faint { color: #9cc4e2; }
.bl { color: var(--blue); }
.dd { border: 4px solid transparent; border-top: 4px solid var(--blue); border-bottom: 0; margin-right: 3px; }
.mi { width: 6px; height: 2px; background: var(--navy); margin-right: 11px; }
.pl { width: 10px; height: 10px; margin-right: 5px; background: linear-gradient(var(--blue), var(--blue)) 50% 50%/10px 2px no-repeat, linear-gradient(var(--blue), var(--blue)) 50% 50%/2px 10px no-repeat; }
.plain.mx-buy { padding-right: 0; }
.plain button { width: 40px; height: 24px; background: var(--blue); color: var(--paper); margin-left: 10px; }
.radios { color: var(--blue); font: 12px "Noto Sans", sans-serif; }
.radios span { width: 44px; display: flex; align-items: center; gap: 6px; }
.radios i { width: 12px; height: 12px; border: 1px solid var(--blue); border-radius: 50%; flex: none; }
.buy { display: block; width: 90px; height: 36px; margin: 16px 0 0 22px; background: var(--orange); color: var(--paper); border-left: 1px solid var(--navy); font: 500 13px "Noto Sans CJK SC", sans-serif; word-spacing: 3px; }
.detail { flex: 1; border-left: 1px solid var(--navy); border-right: 1px solid var(--blue); display: flex; flex-direction: column; }
.dt-tabs { display: flex; height: 24px; border-bottom: 1px solid var(--blue); line-height: 23px; }
.dt-tabs s { width: 10px; border-right: 1px solid var(--blue); background: repeating-linear-gradient(var(--blue) 0 1px, transparent 1px 3px) 3px 4px/4px 15px no-repeat; }
.dt-tabs span { width: 96px; border-right: 1px solid var(--blue); padding: 0 6px 0 9px; display: flex; justify-content: space-between; }
.dt-tabs span i { font: bold 14px/22px "Noto Sans", sans-serif; }
.dt-tabs em { flex: 1; --dot: var(--blue); background: var(--sq) 0 0/3px 3px; }
.detail table { table-layout: fixed; border-collapse: collapse; width: 577px; margin-top: 1px; }
.detail th, .detail td { padding: 0; height: 22px; font-weight: 400; text-align: right; white-space: nowrap; }
.detail td:first-child { padding-right: 1px; }
.detail .op { text-align: center; padding-left: 2px; }
.detail th.op { padding-left: 17px; }
.detail th.dt { padding-right: 4px; }
.detail .d { font-family: "Noto Sans", sans-serif; font-weight: 500; }
.detail td button { width: 74px; height: 16px; line-height: 16px; background: var(--blue); color: var(--paper); display: block; margin-left: 18px; }
.dt-foot { margin-top: auto; width: 320px; border-bottom: 1px dotted var(--blue); }
.tr-foot { height: 24px; flex: none; display: flex; align-items: center; padding-left: 16px; }
.tr-foot b { color: var(--orange); font-weight: 700; font-family: "Liberation Mono", monospace; }
.tr-foot span:first-child { width: 108px; white-space: pre; }
.tr-foot hr { margin: 0 14px 0 0; width: 1px; height: 19px; border: 0; border-left: 1px dotted var(--blue); }
.f1 { margin-right: 1px; } .f2 { margin: 0 7px 0 29px; } .f3 { margin: 0 6px 0 17px; }
.six { font: bold 10px "Liberation Sans", sans-serif; fill: var(--blue); }
.kf { color: var(--orange); }
.cursor { position: absolute; left: 966px; top: 231px; }

/* remote desktop connection bar */
.rdp { position: absolute; left: 604px; top: 0; width: 712px; height: 32px; }
.rdp-bg { position: absolute; left: 0; top: 0; }
.rdp-row { position: relative; display: flex; justify-content: space-between; align-items: center; padding: 0 52px 0 52px; height: 32px; color: var(--paper); font-size: 16px; }
.rdp-row span { margin-left: 27px; margin-top: -1px; }
.rdp-row svg { margin-top: -3px; }

/* taskbar */
.taskbar { position: absolute; left: 0; top: 1040px; width: 1920px; height: 40px; background: var(--navy); color: var(--paper); display: flex; justify-content: space-between; align-items: center; }
.tb-apps { display: flex; padding-left: 12px; }
.a { width: 24px; height: 24px; margin-right: 25.300px; }
.tb-lines { position: absolute; left: 103px; bottom: 0; display: flex; }
.tb-lines i { height: 2px; width: 40px; background: #8cbce2; }
.tb-lines i:nth-child(2) { margin: 0 5px 0 107px; }
.tb-lines i:nth-child(3) { width: 48px; }
.tray { display: flex; align-items: center; height: 40px; border-right: 1px dotted var(--orange); margin-right: 4px; }
.tray svg { margin-right: 8px; }
.tray svg:first-child { margin-right: 10px; }
.tray svg:nth-child(4) { margin-left: 3px; margin-right: 14px; }
.ime { width: 27px; }
.pin { width: 14px; height: 14px; font-size: 12px; line-height: 14px; background: var(--paper); color: var(--navy); text-align: center; margin-right: 15px; }
.clock { width: 64px; text-align: center; line-height: 19px; margin-right: 17px; font-weight: 500; }
.tray .note { margin-right: 11px; margin-top: 4px; }
.badge { font: bold 13px "Noto Sans", sans-serif; fill: var(--paper); text-anchor: middle; }
```
